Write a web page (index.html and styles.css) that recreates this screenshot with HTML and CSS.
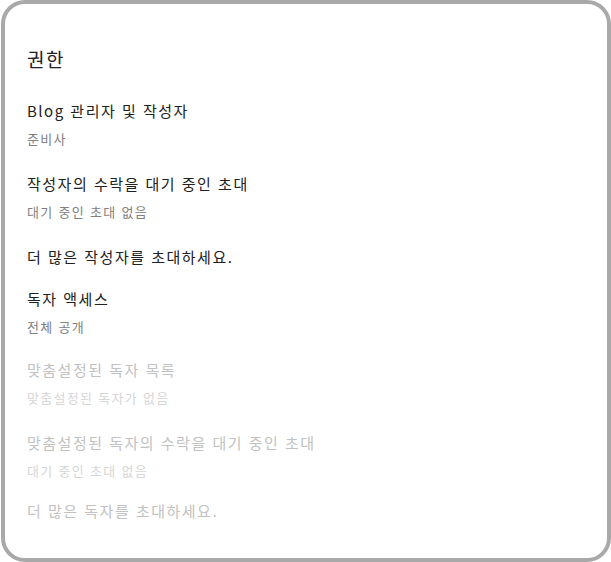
FILE: index.html
```html
<!DOCTYPE html>
<html lang="ko">
<head>
<meta charset="utf-8">
<link rel="stylesheet" href="styles.css">
</head>
<body>
<div class="panel">
  <h1 class="heading">권한</h1>
  <div class="item">
    <div class="title">Blog 관리자 및 작성자</div>
    <div class="sub">준비사</div>
  </div>
  <div class="item">
    <div class="title">작성자의 수락을 대기 중인 초대</div>
    <div class="sub">대기 중인 초대 없음</div>
  </div>
  <div class="item single">
    <div class="title">더 많은 작성자를 초대하세요.</div>
  </div>
  <div class="item access">
    <div class="title">독자 액세스</div>
    <div class="sub">전체 공개</div>
  </div>
  <div class="item disabled">
    <div class="title">맞춤설정된 독자 목록</div>
    <div class="sub">맞춤설정된 독자가 없음</div>
  </div>
  <div class="item disabled tight">
    <div class="title">맞춤설정된 독자의 수락을 대기 중인 초대</div>
    <div class="sub">대기 중인 초대 없음</div>
  </div>
  <div class="item single disabled">
    <div class="title">더 많은 독자를 초대하세요.</div>
  </div>
</div>
</body>
</html>
```
FILE: styles.css
```css
html, body {
  margin: 0;
  padding: 0;
  background: #ffffff;
}
body {
  font-family: "Noto Sans CJK KR", "Noto Sans", Roboto, sans-serif;
}
.panel {
  box-sizing: border-box;
  width: 610px;
  height: 562px;
  margin-left: 1px;
  border: 4px solid #a9a9a9;
  border-radius: 24px;
  padding: 43px 22px 0 22px;
  display: flex;
  flex-direction: column;
}
.heading {
  margin: 0 0 30px 0;
  font-size: 19px;
  font-weight: 400;
  line-height: 24px;
  letter-spacing: 1.5px;
  color: #212121;
}
.item {
  display: flex;
  flex-direction: column;
  gap: 8px;
  margin-bottom: 25px;
}
.item.access {
  margin-bottom: 23px;
}
.item.tight {
  margin-bottom: 20px;
}
.item.single {
  margin-bottom: 22px;
}
.title {
  font-size: 15px;
  line-height: 20px;
  letter-spacing: 1.5px;
  color: #212121;
}
.sub {
  font-size: 13px;
  line-height: 20px;
  letter-spacing: 1.3px;
  color: #808080;
}
.disabled .title {
  color: #c2c2c2;
}
.disabled .sub {
  color: #d6d6d6;
}
```
